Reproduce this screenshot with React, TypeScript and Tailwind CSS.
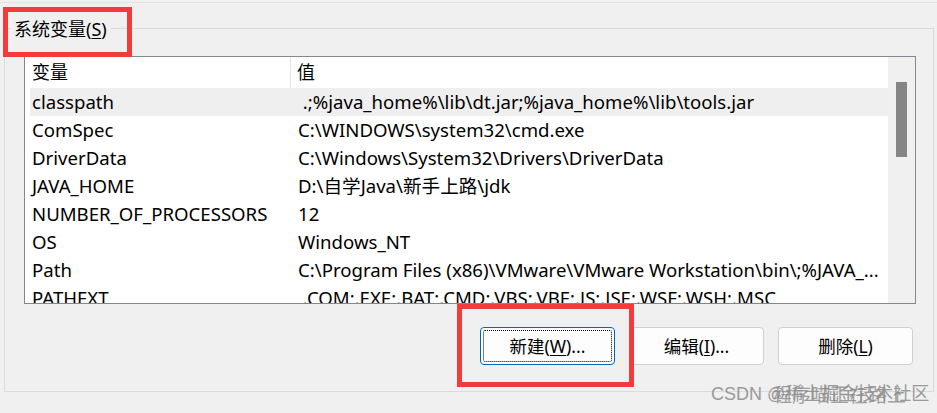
import React from "react";

const rows = [
  { name: "classpath", value: " .;%java_home%\\lib\\dt.jar;%java_home%\\lib\\tools.jar" },
  { name: "ComSpec", value: "C:\\WINDOWS\\system32\\cmd.exe" },
  { name: "DriverData", value: "C:\\Windows\\System32\\Drivers\\DriverData" },
  { name: "JAVA_HOME", value: "D:\\自学Java\\新手上路\\jdk" },
  { name: "NUMBER_OF_PROCESSORS", value: "12" },
  { name: "OS", value: "Windows_NT" },
  { name: "Path", value: "C:\\Program Files (x86)\\VMware\\VMware Workstation\\bin\\;%JAVA_..." },
  { name: "PATHEXT", value: " .COM;.EXE;.BAT;.CMD;.VBS;.VBE;.JS;.JSE;.WSF;.WSH;.MSC" },
];

const font = { fontFamily: '"Noto Sans", "Noto Sans CJK SC", sans-serif' };

const Btn = ({ label, hot, tail, focused }: { label: string; hot: string; tail: string; focused?: boolean }) => (
  <button
    className={
      "relative w-[135px] h-[38px] rounded-[4px] bg-[#fdfdfd] text-[17.5px] text-black flex items-center justify-center " +
      (focused ? "border border-[#0067c0]" : "border border-[#d0d0d0]")
    }
  >
    {focused && <span className="absolute inset-[2px] border border-dotted border-black rounded-[2px]" />}
    <span>
      {label}(<span className="underline underline-offset-2">{hot}</span>){tail}
    </span>
  </button>
);

export default function App() {
  return (
    <div className="relative w-[937px] h-[413px] bg-[#f0f0f0] overflow-hidden text-black" style={font}>
      <div className="h-[3px] border-b border-[#e3e3e3]" />

      {/* group box */}
      <div className="relative ml-[4px] mt-[25px] w-[930px] h-[364px] border border-[#dcdcdc] pt-[27px] pl-[19px]">
        <div className="absolute -top-[13px] left-[6px] px-[3px] bg-[#f0f0f0] text-[18px] leading-[26px]">
          系统变量(<span className="underline underline-offset-2">S</span>)
        </div>

        {/* list view */}
        <div className="w-[892px] h-[248px] border border-[#828790] bg-white flex overflow-hidden">
          <div className="flex-1 flex flex-col text-[18.6px]">
            <div className="h-[31px] flex shrink-0 text-[18px]">
              <div className="w-[266px] pl-[7px] flex items-center border-r border-[#e5e5e5]">变量</div>
              <div className="pl-[6px] flex items-center">值</div>
            </div>
            {rows.map((r, i) => (
              <div
                key={r.name}
                className={"h-[28px] shrink-0 ml-[5px] flex items-center whitespace-pre " + (i === 0 ? "bg-[#efefef]" : "")}
              >
                <div className="w-[262px] shrink-0 pl-[2px]">{r.name}</div>
                <div className="pl-[6px]">{r.value}</div>
              </div>
            ))}
          </div>
          <div className="w-[27px] bg-[#f0f0f0] pt-[25px] pl-[8px] shrink-0">
            <div className="w-[11px] h-[75px] bg-[#858585]" />
          </div>
        </div>

        {/* buttons */}
        <div className="mt-[23px] w-[889px] flex justify-end gap-[14px]">
          <Btn label="新建" hot="W" tail="..." focused />
          <Btn label="编辑" hot="I" tail="..." />
          <Btn label="删除" hot="L" tail="" />
        </div>
      </div>

      {/* red annotation boxes */}
      <div className="absolute left-[3px] top-[7px] w-[129px] h-[50px] border-[5px] border-[#f33b3b]" />
      <div className="absolute left-[457px] top-[304px] w-[177px] h-[83px] border-[5px] border-[#f33b3b]" />

      {/* watermark */}
      <div
        className="absolute left-[711px] top-[381px] text-[18px] leading-[26px] text-[#9a9a9a] whitespace-nowrap"
        style={{ fontFamily: '"Liberation Sans", "Noto Sans CJK SC", sans-serif' }}
      >
        CSDN @稀土掘金技术社区
      </div>
      <div
        className="absolute left-[773px] top-[381px] text-[19px] leading-[26px] text-[#8c8c8c] whitespace-nowrap opacity-80"
        style={{ fontFamily: '"Noto Sans CJK SC", sans-serif' }}
      >
        程序喵正在路上
      </div>
    </div>
  );
}
